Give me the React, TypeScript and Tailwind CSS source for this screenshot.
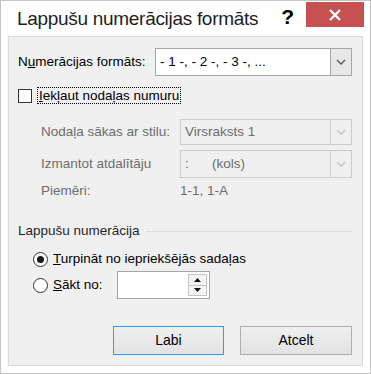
const font = { fontFamily: '"Liberation Sans", Arial, sans-serif' };

const Chevron = ({ color }: { color: string }) => (
  <svg width="10" height="6" viewBox="0 0 10 6">
    <polyline points="1,1 5,5 9,1" fill="none" stroke={color} strokeWidth="1.5" />
  </svg>
);

const Select = ({
  children,
  disabled,
  className,
}: {
  children: React.ReactNode;
  disabled?: boolean;
  className: string;
}) => (
  <div
    className={
      disabled
        ? `flex border border-[#cccccc] bg-[#f0f0f0] ${className}`
        : `flex border border-[#a6a6a6] bg-white ${className}`
    }
  >
    <div className="flex flex-1 items-center whitespace-nowrap pl-[4px]">{children}</div>
    <div
      className={
        disabled
          ? "flex w-[21px] items-center justify-center border-l border-[#cccccc] bg-[#f0f0f0]"
          : "flex w-[21px] items-center justify-center border-l border-[#a6a6a6] bg-[#e8e8e8]"
      }
    >
      <Chevron color={disabled ? "#c4c4c4" : "#606060"} />
    </div>
  </div>
);

const Radio = ({ checked }: { checked?: boolean }) => (
  <div className="flex h-[15px] w-[15px] shrink-0 items-center justify-center rounded-full border border-[#333333] bg-white">
    {checked && <div className="h-[7px] w-[7px] rounded-full bg-[#1a1a1a]" />}
  </div>
);

export default function App() {
  return (
    <div
      className="flex h-[374px] w-[371px] flex-col whitespace-nowrap border border-[#c4c4c4] bg-white text-[13.5px] text-black"
      style={font}
    >
      {/* Title bar */}
      <div className="flex h-[35px] shrink-0 items-start">
        <div className="pl-[16px] pt-[6px] text-[19px] leading-[24px] tracking-[-0.3px] text-[#1e1e1e]">
          Lappušu numerācijas formāts
        </div>
        <div className="ml-auto pt-[4px] text-[21px] font-bold leading-[24px]">?</div>
        <div className="ml-[12px] mr-[6px] mt-[1px] flex h-[25px] w-[58px] items-center justify-center bg-[#c75050]">
          <svg width="12" height="12" viewBox="0 0 12 12">
            <path d="M1,1 L11,11 M11,1 L1,11" stroke="white" strokeWidth="2.4" />
          </svg>
        </div>
      </div>

      {/* Client area */}
      <div className="mx-[7px] mb-[7px] flex flex-1 flex-col border border-[#dadada] bg-[#f0f0f0] pl-[9px] pr-[10px]">
        <div className="mt-[11px] flex items-center">
          <div className="w-[137px]">
            N<span className="underline">u</span>merācijas formāts:
          </div>
          <Select className="h-[28px] flex-1">
            <span>- 1 -, - 2 -, - 3 -, ...</span>
          </Select>
        </div>

        <div className="mt-[11px] flex h-[17px] items-center">
          <div className="h-[14px] w-[14px] border border-[#333333] bg-white" />
          <div className="ml-[5px] border border-dotted border-black px-[1px] leading-[15px]">
            <span className="underline">I</span>ekļaut nodaļas numuru
          </div>
        </div>

        <div className="mt-[15px] flex flex-col pl-[23px] text-[#6d6d6d]">
          <div className="flex items-center">
            <div className="w-[139px]">Nodaļa sākas ar stilu:</div>
            <Select disabled className="h-[26px] flex-1">
              <span>Virsraksts 1</span>
            </Select>
          </div>
          <div className="mt-[5px] flex items-center">
            <div className="w-[139px]">Izmantot atdalītāju</div>
            <Select disabled className="h-[28px] flex-1">
              <span className="w-[27px]">:</span>
              <span>(kols)</span>
            </Select>
          </div>
          <div className="mt-[5px] flex h-[17px] items-center">
            <div className="w-[139px]">Piemēri:</div>
            <div>1-1, 1-A</div>
          </div>
        </div>

        <div className="mt-[23px] flex h-[16px] items-center">
          <div className="text-[#262626]">Lappušu numerācija</div>
          <div className="ml-[6px] h-px flex-1 bg-[#dcdcdc]" />
        </div>

        <div className="mt-[9px] flex h-[22px] items-center pl-[15px]">
          <Radio checked />
          <div className="ml-[5px]">
            <span className="underline">T</span>urpināt no iepriekšējās sadaļas
          </div>
        </div>

        <div className="mt-px flex items-center pl-[15px]">
          <Radio />
          <div className="ml-[5px] w-[64px]">
            <span className="underline">S</span>ākt no:
          </div>
          <div className="flex h-[28px] w-[93px] border border-[#a6a6a6] bg-white">
            <div className="flex-1" />
            <div className="my-[2px] mr-[2px] flex w-[19px] flex-col border border-[#c4c4c4] bg-[#f4f4f4]">
              <div className="flex flex-1 items-center justify-center border-b border-[#c4c4c4]">
                <svg width="7" height="4" viewBox="0 0 7 4">
                  <polygon points="0,4 3.5,0 7,4" fill="#111" />
                </svg>
              </div>
              <div className="flex flex-1 items-center justify-center">
                <svg width="7" height="4" viewBox="0 0 7 4">
                  <polygon points="0,0 7,0 3.5,4" fill="#111" />
                </svg>
              </div>
            </div>
          </div>
        </div>

        <div className="mt-auto mb-[10px] flex justify-end gap-[16px]">
          <button className="h-[29px] w-[111px] border border-[#3399ff] bg-gradient-to-b from-[#efefef] to-[#e3e3e3] text-[14px]">
            Labi
          </button>
          <button className="h-[29px] w-[112px] border border-[#adadad] bg-gradient-to-b from-[#efefef] to-[#e3e3e3] text-[14px]">
            Atcelt
          </button>
        </div>
      </div>
    </div>
  );
}
